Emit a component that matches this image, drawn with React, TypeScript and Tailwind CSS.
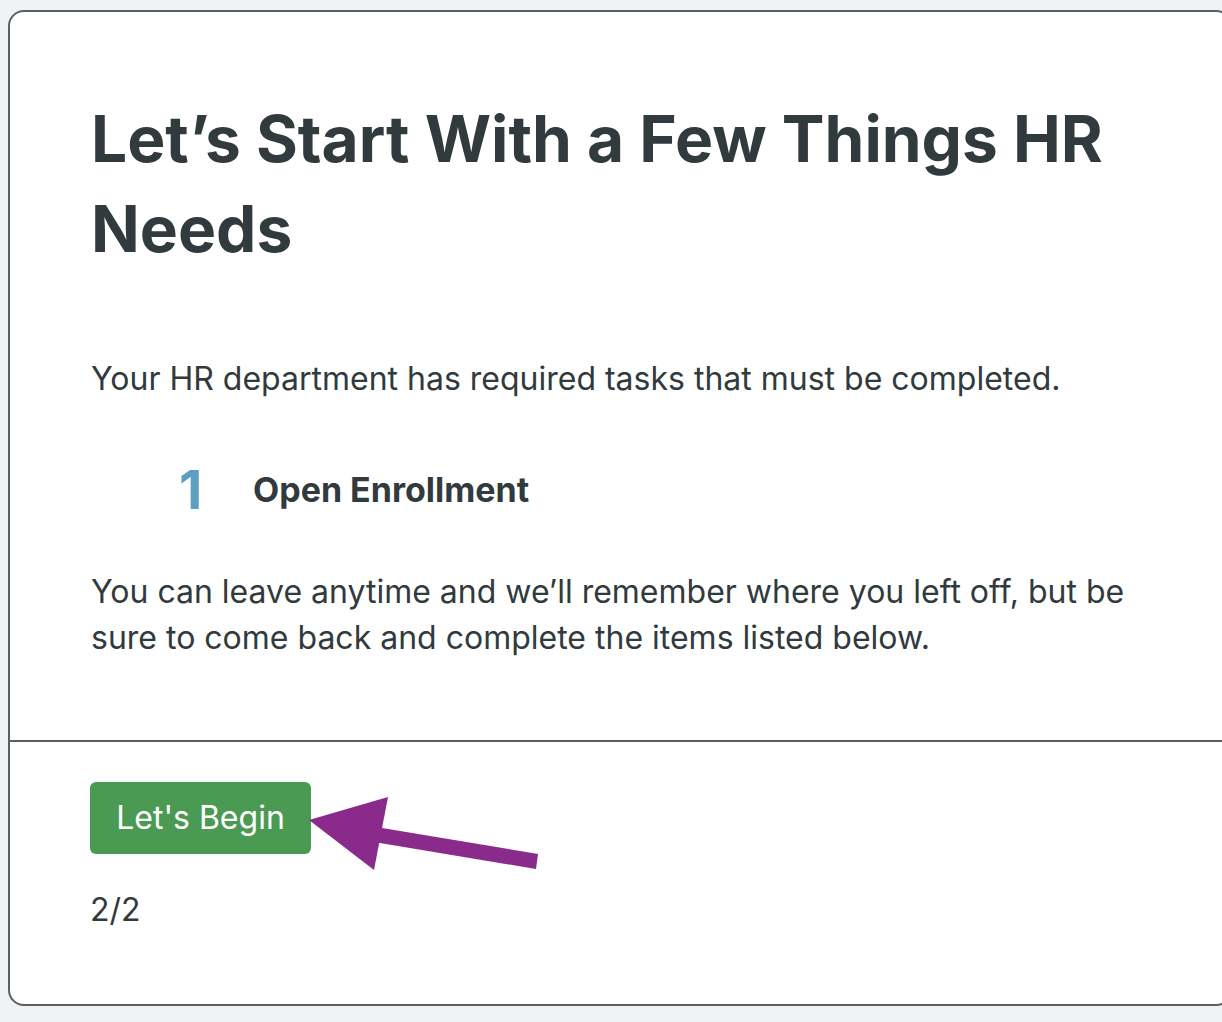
import React from "react";

export default function App() {
  return (
    <div className="w-[1222px] h-[1022px] overflow-hidden bg-[#f1f2f4] pt-[10px] pl-[8px]" style={{ fontFamily: "Inter, 'Noto Sans', sans-serif" }}>
      <div className="relative w-[1224px] h-[996px] rounded-[16px] border-2 border-[#596065] bg-white text-[#313a3d]">
        <div className="px-[81px] pt-[82px]">
          <h1 className="text-[64px] font-bold leading-[90px]">Let’s Start With a Few Things HR Needs</h1>
          <p className="mt-[82px] text-[32px] leading-[46px]">Your HR department has required tasks that must be completed.</p>
          <div className="mt-[58px] flex items-center pl-[88px]">
            <span className="w-[74px] text-[54px] font-bold leading-[60px] text-[#5c9fc1]">1</span>
            <span className="text-[34px] font-bold leading-[46px]">Open Enrollment</span>
          </div>
          <p className="mt-[49px] text-[32px] leading-[46px]">You can leave anytime and we’ll remember where you left off, but be sure to come back and complete the items listed below.</p>
        </div>
        <div className="mt-[79px] h-[2px] bg-[#596065]" />
        <div className="px-[80px] pt-[40px]">
          <button className="h-[72px] w-[221px] rounded-[6px] bg-[#4b9a53] text-[32px] text-white">Let's Begin</button>
          <p className="mt-[33px] text-[32px] leading-[46px]">2/2</p>
        </div>
        <svg className="absolute left-[282px] top-[763px]" width="260" height="110" viewBox="292 775 260 110">
          <polygon points="309,820 388,797 374,870" fill="#8a2a8a" />
          <polygon points="370,826 538,854 536,869 368,841" fill="#8a2a8a" />
        </svg>
      </div>
    </div>
  );
}
